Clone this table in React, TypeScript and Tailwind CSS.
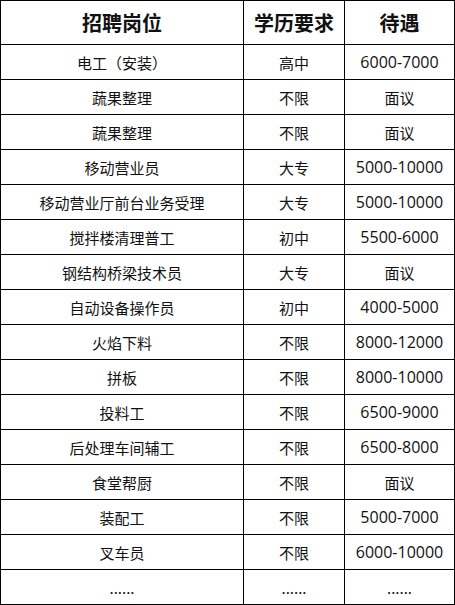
const rows: [string, string, string][] = [
  ["电工（安装）", "高中", "6000-7000"],
  ["蔬果整理", "不限", "面议"],
  ["蔬果整理", "不限", "面议"],
  ["移动营业员", "大专", "5000-10000"],
  ["移动营业厅前台业务受理", "大专", "5000-10000"],
  ["搅拌楼清理普工", "初中", "5500-6000"],
  ["钢结构桥梁技术员", "大专", "面议"],
  ["自动设备操作员", "初中", "4000-5000"],
  ["火焰下料", "不限", "8000-12000"],
  ["拼板", "不限", "8000-10000"],
  ["投料工", "不限", "6500-9000"],
  ["后处理车间辅工", "不限", "6500-8000"],
  ["食堂帮厨", "不限", "面议"],
  ["装配工", "不限", "5000-7000"],
  ["叉车员", "不限", "6000-10000"],
  ["......", "......", "......"],
];

// salary ranges are set in a latin face, like the original sheet
const isNumber = (s: string) => /^[\d-]+$/.test(s);

export default function App() {
  return (
    <div className="w-[455px] h-[605px] bg-white font-['Noto_Sans_CJK_SC','Noto_Sans',sans-serif] text-[#111]">
      <table className="w-[454px] border-collapse table-fixed">
        <colgroup>
          <col className="w-[243px]" />
          <col className="w-[101px]" />
          <col className="w-[110px]" />
        </colgroup>
        <thead>
          <tr className="h-[44px]">
            <th className="border border-black text-[20px] font-bold p-0 leading-none">招聘岗位</th>
            <th className="border border-black text-[20px] font-bold p-0 leading-none">学历要求</th>
            <th className="border border-black text-[20px] font-bold p-0 leading-none">待遇</th>
          </tr>
        </thead>
        <tbody>
          {rows.map((row, i) => (
            <tr key={i} className="h-[35px]">
              {row.map((cell, j) => (
                <td
                  key={j}
                  className={
                    isNumber(cell)
                      ? "border border-black text-center p-0 leading-none text-[16px] font-['Open_Sans',sans-serif]"
                      : "border border-black text-center p-0 leading-none text-[15px]"
                  }
                >
                  {cell}
                </td>
              ))}
            </tr>
          ))}
        </tbody>
      </table>
    </div>
  );
}
